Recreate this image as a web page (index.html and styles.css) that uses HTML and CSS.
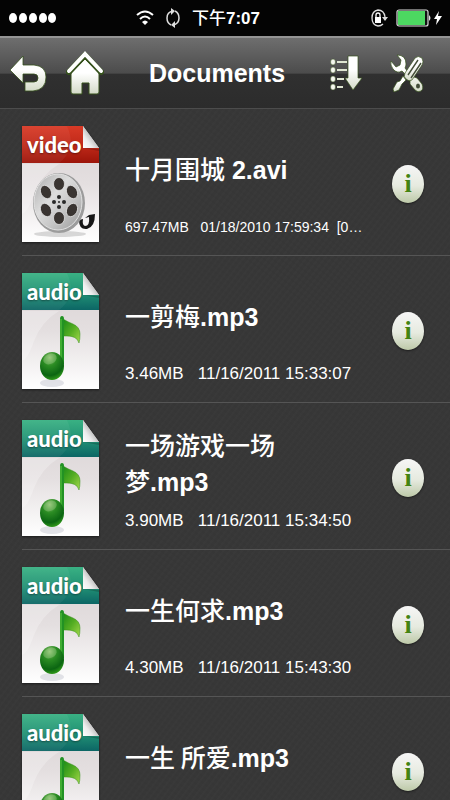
FILE: index.html
```html
<!DOCTYPE html>
<html lang="zh-CN">
<head>
<meta charset="utf-8">
<meta name="viewport" content="width=device-width, initial-scale=1">
<title>Documents</title>
<link rel="stylesheet" href="styles.css">
</head>
<body>
<svg class="defs" width="0" height="0" aria-hidden="true">
  <defs>
    <linearGradient id="red" x2="0" y2="1"><stop offset="0" stop-color="#d83a26"/><stop offset=".5" stop-color="#c12a1a"/><stop offset="1" stop-color="#9c1409"/></linearGradient>
    <linearGradient id="teal" x2="0" y2="1"><stop offset="0" stop-color="#39b183"/><stop offset=".55" stop-color="#219074"/><stop offset="1" stop-color="#0c6665"/></linearGradient>
    <linearGradient id="paper" x2="0" y2="1"><stop offset="0" stop-color="#d8d1d2"/><stop offset=".5" stop-color="#e4dfe0"/><stop offset="1" stop-color="#fff"/></linearGradient>
    <linearGradient id="fold" x1="0" y1="1" x2="1" y2="0"><stop offset="0" stop-color="#fff"/><stop offset=".3" stop-color="#ececec"/><stop offset=".6" stop-color="#b5b5b5"/></linearGradient>
    <linearGradient id="metal" x2="1" y2="1"><stop offset="0" stop-color="#aaa"/><stop offset=".4" stop-color="#ddd"/><stop offset=".65" stop-color="#c4c4c4"/><stop offset="1" stop-color="#999"/></linearGradient>
    <radialGradient id="ball" cx=".4" cy=".2" r=".85"><stop offset="0" stop-color="#87bd6b"/><stop offset=".35" stop-color="#2b8c23"/><stop offset=".75" stop-color="#0b6512"/><stop offset="1" stop-color="#38a51c"/></radialGradient>
    <linearGradient id="flag" x2="1" y2="1"><stop offset="0" stop-color="#198b18"/><stop offset=".5" stop-color="#54ad22"/><stop offset="1" stop-color="#a5d94c"/></linearGradient>
    <linearGradient id="ivory" x2="0" y2="1"><stop offset=".4" stop-color="#fff"/><stop offset="1" stop-color="#d3dac7"/></linearGradient>
  </defs>
  <symbol id="sheet" viewBox="0 0 77 116">
    <path d="M0 0H61L77 22V116H0Z" fill="url(#paper)"/>
    <path d="M0 38H37Q20 48 12 68Q6 86 0 88Z" fill="#fff" opacity=".25"/>
  </symbol>
  <symbol id="corner" viewBox="0 0 77 116">
    <path d="M0 37V0H45Q53 18 44 30Q41 34 37 37Z" fill="#fff" opacity=".05"/>
    <path d="M61 22L77 23V25Z" fill="#000" opacity=".2"/>
    <path d="M61 0V22H77Z" fill="url(#fold)"/>
  </symbol>
  <symbol id="video" viewBox="0 0 77 116">
    <use href="#sheet"/>
    <path d="M0 0H61V22H77V37H0Z" fill="url(#red)"/>
    <use href="#corner"/>
    <ellipse cx="38" cy="108" rx="26" ry="3" fill="#aaa" opacity=".45"/>
    <path d="M57 94Q57 104 65 103Q73 101 73 88L67 89L63 92L67 91Q68 100 63 100Q60 99 61 93Z" fill="#171717"/>
    <ellipse cx="37" cy="77" rx="26" ry="30" fill="#9c9c9c"/>
    <ellipse cx="36" cy="76" rx="24" ry="28" fill="url(#metal)" stroke="#e2e2e2" stroke-width="1"/>
    <g fill="#3a3532" stroke="#eee" stroke-width=".7">
      <ellipse cx="37" cy="58" rx="5.5" ry="6.5"/><ellipse cx="37" cy="92" rx="5.5" ry="6.5"/>
      <ellipse cx="24" cy="66" rx="5.2" ry="7" transform="rotate(-28 24 66)"/><ellipse cx="50" cy="66" rx="5.2" ry="7" transform="rotate(-28 50 66)"/>
      <ellipse cx="24" cy="84" rx="5.2" ry="7" transform="rotate(-28 24 84)"/><ellipse cx="50" cy="84" rx="5.2" ry="7" transform="rotate(28 50 84)"/>
    </g>
    <g fill="#292929"><circle cx="37" cy="71" r="2"/><circle cx="37" cy="81" r="2"/><circle cx="32" cy="76" r="2"/><circle cx="42" cy="76" r="2"/><circle cx="37" cy="76" r="1"/></g>
  </symbol>
  <symbol id="audio" viewBox="0 0 77 116">
    <use href="#sheet"/>
    <path d="M0 0H61V22H77V37H0Z" fill="url(#teal)"/>
    <use href="#corner"/>
    <ellipse cx="30" cy="110" rx="12" ry="4" fill="#b9bcc8" opacity=".4"/>
    <path d="M41 46Q46 49 51 51Q58 54 58 61Q58 67 57 70Q55 62 42 63Z" fill="url(#flag)" stroke="#358f18" stroke-width=".5"/>
    <path d="M38 46Q38 43 40 43Q42 43 42 46V92L38 88Z" fill="#229224"/>
    <path d="M39 46V87" stroke="#5fc640" stroke-width="1"/>
    <ellipse cx="30" cy="93" rx="12" ry="14" fill="url(#ball)"/>
    <ellipse cx="28" cy="86" rx="7" ry="5" fill="#d5f0bd" opacity=".25" transform="rotate(-24 28 86)"/>
  </symbol>
</svg>

<div class="status">
  <svg class="signal" viewBox="0 0 49 12" role="img" aria-label="Signal"><g fill="#fff"><ellipse cx="5" cy="6" rx="4" ry="5"/><ellipse cx="15" cy="6" rx="4" ry="5"/><ellipse cx="25" cy="6" rx="4" ry="5"/><ellipse cx="35" cy="6" rx="4" ry="5"/><ellipse cx="44" cy="6" rx="4" ry="5"/></g></svg>
  <div class="center">
    <svg width="18" height="18" viewBox="0 0 18 18" fill="none" stroke="#fff" stroke-width="2" aria-hidden="true"><path d="M1 6Q9-1 17 6M4 10Q9 5 14 10"/><path d="M6 13Q9 10 12 13L9 16Z" fill="#fff" stroke="none"/></svg>
    <svg width="14" height="20" viewBox="0 0 14 20" fill="none" stroke="#ddd" stroke-width="1.5" aria-hidden="true"><path d="M5 17Q1 15 1 10Q1 4 7 3M9 3Q13 5 13 10Q13 16 7 17"/><path d="M5 0L9 3L5 7ZM9 13L5 17L9 20Z" fill="#ddd" stroke="none"/></svg>
    <span class="time"><span class="cjk">下午</span><b>7:07</b></span>
  </div>
  <div class="power">
    <svg width="17" height="20" viewBox="0 0 17 20" aria-hidden="true"><path d="M12 16Q10 18 7 18Q1 17 1 10Q1 3 7 2Q13 2 14 9" fill="none" stroke="#ddd" stroke-width="1.3"/><path d="M11 9H17L14 13Z" fill="#ddd"/><path d="M4 9H10V15H4Z" fill="#fff"/><path d="M5 9V7Q5 5 7 5Q9 5 9 7V9" fill="none" stroke="#fff" stroke-width="1.3"/></svg>
    <svg width="46" height="18" viewBox="0 0 46 18" role="img" aria-label="Charging"><rect x="1" y="1" width="31" height="16" rx="2" fill="#111" stroke="#ddd" stroke-width="1.2"/><path d="M2 2H29V16H2Z" fill="#4cd861"/><path d="M33 6Q36 9 33 12Z" fill="#ddd"/><path d="M43 2L38 10H41L40 16L46 7H42Z" fill="#fff"/></svg>
  </div>
</div>

<header class="bar">
  <button class="tool" aria-label="Back"><svg width="38" height="38" viewBox="0 0 38 38"><path d="M0 16L13 2V11H24Q36 12 36 23Q36 36 23 37H15V28H24Q28 28 28 24Q28 20 24 20H13V29Z" fill="url(#ivory)" stroke="#36511d" stroke-width=".8"/></svg></button>
  <button class="tool" aria-label="Home"><svg width="38" height="44" viewBox="0 0 38 44"><path d="M5 22L19 8L33 22V41Q33 43 31 43H23V32H16V43H7Q5 43 5 41Z" fill="url(#ivory)" stroke="#36511d" stroke-width="1"/><path d="M3 21L19 4L35 21" fill="none" stroke="#36511d" stroke-width="6" stroke-linecap="round" stroke-linejoin="round"/><path d="M3 20L19 3L35 20" fill="none" stroke="#fff" stroke-width="4" stroke-linecap="round"/></svg></button>
  <h1>Documents</h1>
  <button class="tool" aria-label="Sort"><svg width="32" height="36" viewBox="0 0 32 36"><g fill="#f5f7ee" stroke="#36511d" stroke-width=".5"><ellipse cx="3" cy="7" rx="2.5" ry="3"/><ellipse cx="3" cy="15" rx="2.5" ry="3"/><ellipse cx="3" cy="24" rx="2.5" ry="3"/><ellipse cx="3" cy="32" rx="2.5" ry="3"/></g><path d="M7 7H17M7 15H17M7 24H14M7 32H13" stroke="#dfe6d2" stroke-width="2"/><path d="M18 1H28V23H32L23 35L15 23H18Z" fill="url(#ivory)" stroke="#36511d" stroke-width=".7"/></svg></button>
  <button class="tool" aria-label="Settings"><svg width="34" height="40" viewBox="0 0 34 40"><g stroke="#36511d" stroke-width=".7" fill="url(#ivory)"><path d="M7 2Q16 2 16 11Q16 13 15 15L21 23L27 25L32 31Q34 36 31 38Q28 40 25 37L20 31V26L12 18Q7 21 3 16Q0 12 1 8L6 14L10 12L11 7Z"/><path d="M25 5Q28 2 32 5Q34 9 32 12L22 27Q19 29 16 26Q13 24 15 20Z"/><path d="M13 23L16 27L12 31L9 37L4 39L3 36L7 29L10 28Z"/></g><path d="M18 22L28 7M21 25L31 10" stroke="#46503a" stroke-width="1.4"/><ellipse cx="28" cy="33" rx="2" ry="2.5" fill="#414b37"/></svg></button>
</header>

<main>
  <ul class="files">
    <li class="file">
      <div class="kind"><svg viewBox="0 0 77 116" aria-hidden="true"><use href="#video"/></svg><span class="badge">video</span></div>
      <div class="text"><h2><span class="cjk">十月围城</span> 2.avi</h2><p class="meta small">697.47MB   01/18/2010 17:59:34  [0…</p></div>
      <button class="info" aria-label="Info">i</button>
    </li>
    <li class="file">
      <div class="kind"><svg viewBox="0 0 77 116" aria-hidden="true"><use href="#audio"/></svg><span class="badge">audio</span></div>
      <div class="text"><h2><span class="cjk">一剪梅</span>.mp3</h2><p class="meta">3.46MB   11/16/2011 15:33:07</p></div>
      <button class="info" aria-label="Info">i</button>
    </li>
    <li class="file">
      <div class="kind"><svg viewBox="0 0 77 116" aria-hidden="true"><use href="#audio"/></svg><span class="badge">audio</span></div>
      <div class="text"><h2><span class="cjk">一场游戏一场梦</span>.mp3</h2><p class="meta">3.90MB   11/16/2011 15:34:50</p></div>
      <button class="info" aria-label="Info">i</button>
    </li>
    <li class="file">
      <div class="kind"><svg viewBox="0 0 77 116" aria-hidden="true"><use href="#audio"/></svg><span class="badge">audio</span></div>
      <div class="text"><h2><span class="cjk">一生何求</span>.mp3</h2><p class="meta">4.30MB   11/16/2011 15:43:30</p></div>
      <button class="info" aria-label="Info">i</button>
    </li>
    <li class="file">
      <div class="kind"><svg viewBox="0 0 77 116" aria-hidden="true"><use href="#audio"/></svg><span class="badge">audio</span></div>
      <div class="text"><h2><span class="cjk">一生 所爱</span>.mp3</h2></div>
      <button class="info" aria-label="Info">i</button>
    </li>
  </ul>
</main>
</body>
</html>
```
FILE: styles.css
```css
* { box-sizing: border-box; }

html { height: 100%; }

body {
  margin: 0;
  height: 100%;
  display: flex;
  flex-direction: column;
  overflow: hidden;
  background: #363636;
  color: #fff;
  font-family: "Liberation Sans", "Noto Sans CJK SC", sans-serif;
}

h1, h2, p, ul { margin: 0; padding: 0; }

button {
  padding: 0;
  border: 0;
  background: none;
  cursor: pointer;
}

svg { display: block; }
.defs { position: absolute; }

.cjk {
  font-family: "Noto Sans CJK SC", sans-serif;
  font-weight: 500;
}

.status {
  flex: none;
  display: grid;
  grid-template-columns: 128px 1fr auto;
  align-items: center;
  height: 36px;
  padding: 0 8px;
  background: #040404;
}

.signal { width: 49px; height: 12px; }

.center, .power {
  display: flex;
  align-items: center;
  gap: 12px;
}

.power { gap: 8px; }
.time { font-size: 17px; line-height: 24px; white-space: nowrap; }

.bar {
  flex: none;
  display: flex;
  align-items: center;
  height: 73px;
  padding: 0 26px 0 10px;
  border-top: 2px solid #949494;
  border-bottom: 1px solid #4c4c4c;
  background: linear-gradient(#6e6e6e, #4c4c4c 50%, #303030 52%, #2c2c2c);
}

.bar h1 {
  flex: 1;
  font-size: 25px;
  line-height: 32px;
  text-align: center;
}

.tool + .tool { margin-left: 18px; }
h1 + .tool + .tool { margin-left: 28px; }

main {
  flex: 1;
  min-height: 0;
  overflow: hidden;
  background:
    repeating-linear-gradient(37deg, rgba(0, 0, 0, .02) 0 2px, transparent 2px 5px),
    repeating-linear-gradient(-53deg, rgba(255, 255, 255, .01) 0 2px, transparent 2px 5px),
    #373737;
}

.files {
  list-style: none;
  padding-left: 22px;
}

.file {
  display: flex;
  gap: 26px;
  padding: 17px 26px 13px 0;
  border-bottom: 1px solid #555;
}

.kind {
  flex: none;
  position: relative;
  width: 77px;
  height: 116px;
}

.kind svg {
  width: 100%;
  height: 100%;
  filter: drop-shadow(0 1px 1px #1b1b1b);
}

.badge {
  position: absolute;
  top: 4px;
  left: 5px;
  font: 900 22px/30px Lato, sans-serif;
  text-shadow: 0 1px 2px rgba(0, 0, 0, .4);
}

.text {
  flex: 1;
  min-width: 0;
}

.text h2 {
  min-height: 86px;
  max-width: 200px;
  align-content: center;
  font-size: 25px;
  line-height: 34px;
}

.meta {
  padding-top: 5px;
  font-size: 17px;
  line-height: 20px;
  white-space: pre;
}

.small { font-size: 14px; }

.info {
  flex: none;
  align-self: center;
  width: 32px;
  height: 38px;
  border-radius: 50%;
  background: linear-gradient(#f6f6f6, #e6eadf 55%, #bdc9a8);
  box-shadow: 0 1px 2px #1d1d1d;
  color: #438311;
  font: bold 26px/36px "Liberation Serif", serif;
}
```
